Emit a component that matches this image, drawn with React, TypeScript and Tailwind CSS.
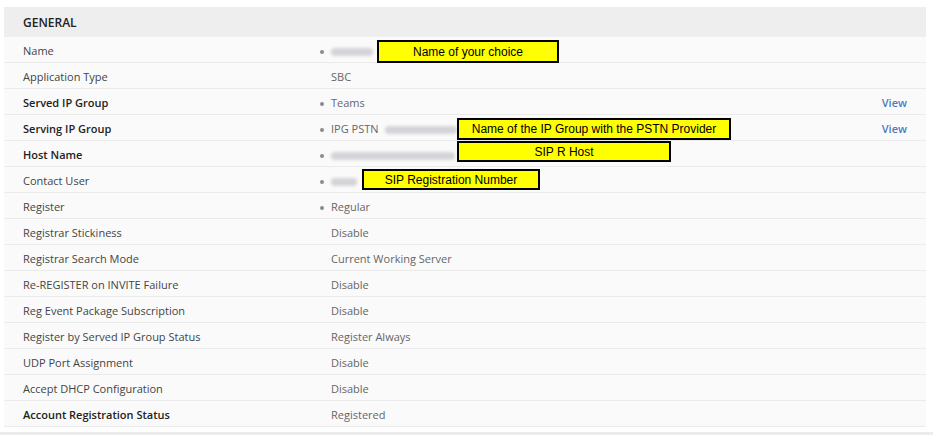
import React from 'react';

type Row = {
  label: string;
  value?: string;
  bold?: boolean;
  bullet?: boolean;
  blur?: number;
  view?: boolean;
};

const rows: Row[] = [
  { label: 'Name', bullet: true, blur: 42 },
  { label: 'Application Type', value: 'SBC' },
  { label: 'Served IP Group', value: 'Teams', bold: true, bullet: true, view: true },
  { label: 'Serving IP Group', value: 'IPG PSTN', bold: true, bullet: true, blur: 72, view: true },
  { label: 'Host Name', bold: true, bullet: true, blur: 124 },
  { label: 'Contact User', bullet: true, blur: 26 },
  { label: 'Register', value: 'Regular', bullet: true },
  { label: 'Registrar Stickiness', value: 'Disable' },
  { label: 'Registrar Search Mode', value: 'Current Working Server' },
  { label: 'Re-REGISTER on INVITE Failure', value: 'Disable' },
  { label: 'Reg Event Package Subscription', value: 'Disable' },
  { label: 'Register by Served IP Group Status', value: 'Register Always' },
  { label: 'UDP Port Assignment', value: 'Disable' },
  { label: 'Accept DHCP Configuration', value: 'Disable' },
  { label: 'Account Registration Status', value: 'Registered', bold: true },
];

function Note({ text, className }: { text: string; className: string }) {
  return (
    <div
      className={`absolute flex items-center justify-center bg-[#ffff00] border-2 border-black text-[12px] text-black ${className}`}
      style={{ fontFamily: 'Arial, "Liberation Sans", sans-serif' }}
    >
      {text}
    </div>
  );
}

export default function App() {
  return (
    <div
      className="relative w-[933px] h-[435px] bg-white overflow-hidden"
      style={{ fontFamily: '"Open Sans", "Noto Sans", sans-serif' }}
    >
      <div className="pt-[7px] pl-[4px] w-[926px]">
        {/* Header */}
        <div className="h-[30px] bg-[#eeeeee] flex items-center pl-[19px] pt-[2px] text-[12px] font-semibold text-[#222]">
          GENERAL
        </div>

        {/* Rows */}
        <div className="bg-[#fafafa]">
          {rows.map((r) => (
            <div
              key={r.label}
              className="h-[26px] flex items-center pt-[4px] border-b border-[#ebebeb] text-[11px]"
            >
              <div
                className={`w-[316px] pl-[19px] ${r.bold ? 'font-semibold text-[#222]' : 'text-[#444]'}`}
              >
                {r.label}
              </div>
              <div className="w-[11px] flex items-center">
                {r.bullet && <span className="w-[4px] h-[4px] rounded-full bg-[#8a8a8f]" />}
              </div>
              <div className="flex-1 flex items-center text-[#666]">
                {r.value && <span>{r.value}</span>}
                {r.blur && (
                  <span
                    className={`h-[8px] bg-[#d4d4d8] blur-[1.5px] rounded-sm ${r.value ? 'ml-[6px]' : ''}`}
                    style={{ width: r.blur }}
                  />
                )}
              </div>
              {r.view && (
                <div className="pr-[19px] font-semibold text-[#4a7cc0]">View</div>
              )}
            </div>
          ))}
        </div>
      </div>

      <div className="absolute left-0 right-0 top-[432px] h-[3px] bg-[#ececec]" />

      <Note text="Name of your choice" className="left-[377px] top-[40px] w-[182px] h-[23px]" />
      <Note
        text="Name of the IP Group with the PSTN Provider"
        className="left-[457px] top-[118px] w-[274px] h-[22px]"
      />
      <Note text="SIP R Host" className="left-[457px] top-[141px] w-[214px] h-[21px]" />
      <Note text="SIP Registration Number" className="left-[362px] top-[169px] w-[178px] h-[21px]" />
    </div>
  );
}
